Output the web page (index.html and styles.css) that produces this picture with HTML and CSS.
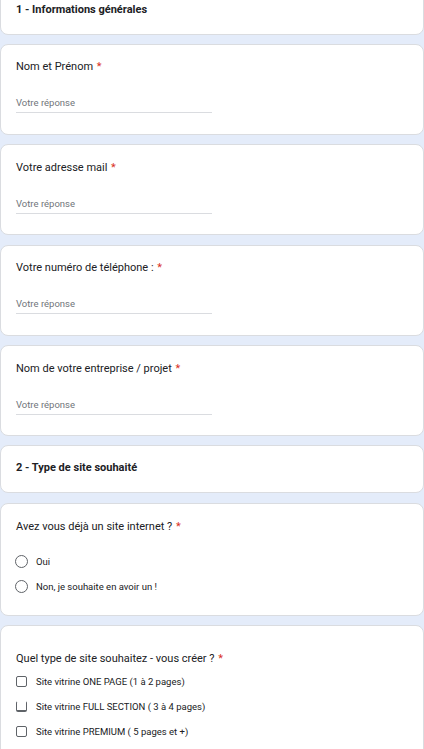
FILE: index.html
```html
<!DOCTYPE html>
<html lang="fr">
<head>
<meta charset="utf-8">
<title>Formulaire</title>
<link rel="stylesheet" href="styles.css">
</head>
<body>
<main class="form">
  <section class="card section-card first">
    <h2 class="section-title">1 - Informations générales</h2>
  </section>

  <section class="card question-card">
    <div class="question">Nom et Prénom <span class="req">*</span></div>
    <div class="answer">Votre réponse</div>
  </section>

  <section class="card question-card">
    <div class="question">Votre adresse mail <span class="req">*</span></div>
    <div class="answer">Votre réponse</div>
  </section>

  <section class="card question-card">
    <div class="question">Votre numéro de téléphone : <span class="req">*</span></div>
    <div class="answer">Votre réponse</div>
  </section>

  <section class="card question-card">
    <div class="question">Nom de votre entreprise / projet <span class="req">*</span></div>
    <div class="answer">Votre réponse</div>
  </section>

  <section class="card section-card">
    <h2 class="section-title">2 - Type de site souhaité</h2>
  </section>

  <section class="card choice-card radio-card">
    <div class="question">Avez vous déjà un site internet ? <span class="req">*</span></div>
    <div class="options">
      <div class="option"><span class="radio"></span><span>Oui</span></div>
      <div class="option"><span class="radio"></span><span>Non, je souhaite en avoir un !</span></div>
    </div>
  </section>

  <section class="card choice-card check-card">
    <div class="question">Quel type de site souhaitez - vous créer ? <span class="req">*</span></div>
    <div class="options">
      <div class="option"><span class="checkbox"></span><span>Site vitrine ONE PAGE (1 à 2 pages)</span></div>
      <div class="option"><span class="checkbox glitch"></span><span>Site vitrine FULL SECTION ( 3 à 4 pages)</span></div>
      <div class="option"><span class="checkbox"></span><span>Site vitrine PREMIUM ( 5 pages et +)</span></div>
    </div>
  </section>
</main>
</body>
</html>
```

FILE: styles.css
```css
html, body {
  margin: 0;
  padding: 0;
}

body {
  background: #e4ecfa;
  font-family: Roboto, "Liberation Sans", sans-serif;
  color: #202124;
  overflow: hidden;
}

.form {
  display: flex;
  flex-direction: column;
  gap: 9.4px;
  margin-top: -13.5px;
}

.card {
  box-sizing: border-box;
  background: #ffffff;
  border: 1px solid #dadce0;
  border-radius: 8px;
  padding-left: 15px;
  padding-right: 15px;
}

.section-card {
  padding-top: 14px;
  padding-bottom: 16px;
}

.section-title {
  margin: 0;
  font-size: 11px;
  font-weight: 700;
  line-height: 16px;
  color: #202124;
}

.question {
  font-size: 11px;
  line-height: 16px;
  color: #202124;
}

.req {
  color: #d93025;
  margin-left: 1px;
}

.question-card {
  padding-top: 14.5px;
  padding-bottom: 20.5px;
}

.answer {
  margin-top: 21px;
  width: 196px;
  font-size: 9.5px;
  line-height: 14px;
  padding-bottom: 2px;
  border-bottom: 1px solid #dadce0;
  color: #70757a;
}

.radio-card {
  padding-top: 15px;
  padding-bottom: 16px;
}

.check-card {
  padding-top: 25px;
  padding-bottom: 16px;
}

.options {
  display: flex;
  flex-direction: column;
}

.radio-card .options {
  margin-top: 14px;
}

.check-card .options {
  margin-top: 1.5px;
}

.option {
  display: flex;
  align-items: center;
  height: 25px;
  font-size: 9.5px;
  color: #202124;
}

.radio {
  box-sizing: border-box;
  width: 13px;
  height: 13px;
  border: 1.5px solid #5f6368;
  border-radius: 50%;
  margin-left: -1px;
  margin-right: 8px;
  flex: none;
}

.checkbox {
  box-sizing: border-box;
  width: 11px;
  height: 11px;
  border: 1.5px solid #5f6368;
  border-radius: 2px;
  margin-right: 9px;
  flex: none;
}

.checkbox.glitch {
  border-top-color: transparent;
  border-bottom-width: 2px;
}
```
